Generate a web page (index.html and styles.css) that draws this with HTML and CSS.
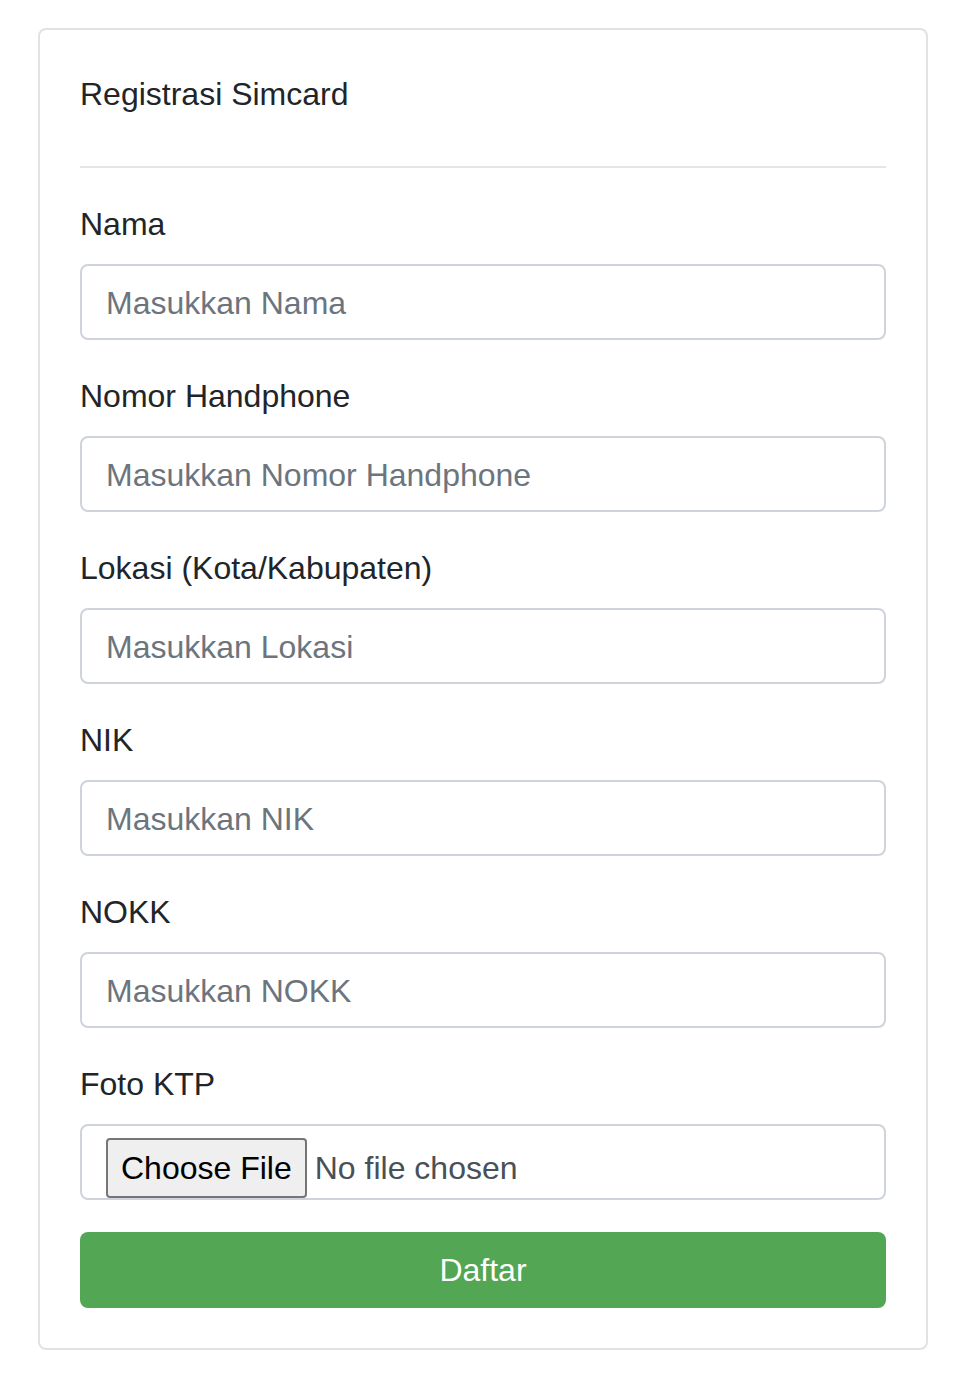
FILE: index.html
```html
<!DOCTYPE html>
<html lang="id">
<head>
<meta charset="utf-8">
<title>Registrasi Simcard</title>
<link rel="stylesheet" href="styles.css">
</head>
<body>
<div class="card">
  <h1 class="title">Registrasi Simcard</h1>
  <hr class="divider">
  <form class="form">
    <div class="group">
      <label class="label">Nama</label>
      <input class="control" type="text" placeholder="Masukkan Nama">
    </div>
    <div class="group">
      <label class="label">Nomor Handphone</label>
      <input class="control" type="text" placeholder="Masukkan Nomor Handphone">
    </div>
    <div class="group">
      <label class="label">Lokasi (Kota/Kabupaten)</label>
      <input class="control" type="text" placeholder="Masukkan Lokasi">
    </div>
    <div class="group">
      <label class="label">NIK</label>
      <input class="control" type="text" placeholder="Masukkan NIK">
    </div>
    <div class="group">
      <label class="label">NOKK</label>
      <input class="control" type="text" placeholder="Masukkan NOKK">
    </div>
    <div class="group">
      <label class="label">Foto KTP</label>
      <div class="file-control">
        <span class="file-btn">Choose File</span>
        <span class="file-name">No file chosen</span>
      </div>
    </div>
    <button class="submit" type="button">Daftar</button>
  </form>
</div>
</body>
</html>
```

FILE: styles.css
```css
* { box-sizing: border-box; }
html, body { margin: 0; padding: 0; background: #fff; }
body {
  font-family: "Helvetica Neue", "Liberation Sans", Arial, sans-serif;
  color: #212529;
  padding: 28px 0 0 38px;
}
.card {
  width: 890px;
  border: 2px solid #e2e2e2;
  border-radius: 8px;
  padding: 40px 40px 40px 40px;
  background: #fff;
}
.title {
  margin: 0;
  padding-top: 1px;
  font-size: 32px;
  font-weight: 400;
  line-height: 47px;
}
.divider {
  margin: 48px 0 32px 0;
  border: 0;
  border-top: 2px solid #e6e6e6;
  height: 0;
}
.form { display: flex; flex-direction: column; }
.group { display: flex; flex-direction: column; margin-bottom: 32px; }
.label {
  font-size: 32px;
  line-height: 47px;
  padding-top: 1px;
  margin-bottom: 16px;
}
.control {
  width: 100%;
  height: 76px;
  padding: 13px 24px 11px 24px;
  font-family: inherit;
  font-size: 32px;
  line-height: 48px;
  color: #495057;
  border: 2px solid #ced4da;
  border-radius: 8px;
  background: #fff;
  outline: none;
}
.control::placeholder { color: #6c757d; opacity: 1; }
.file-control {
  height: 76px;
  border: 2px solid #ced4da;
  border-radius: 8px;
  padding: 12px 24px 0 24px;
  display: flex;
  align-items: flex-start;
  overflow: hidden;
  font-size: 32px;
}
.file-btn {
  display: inline-flex;
  align-items: center;
  height: 60px;
  padding: 0 13px;
  background: #efefef;
  border: 2px solid #767676;
  border-radius: 4px;
  color: #000;
  line-height: 1;
  font-size: 32px;
}
.file-name {
  display: inline-flex;
  align-items: center;
  height: 60px;
  margin-left: 8px;
  color: #495057;
  line-height: 1;
}
.submit {
  width: 100%;
  height: 76px;
  border: 0;
  border-radius: 8px;
  background: #53a653;
  color: #fff;
  font-family: inherit;
  font-size: 32px;
  line-height: 48px;
  cursor: pointer;
}
```
